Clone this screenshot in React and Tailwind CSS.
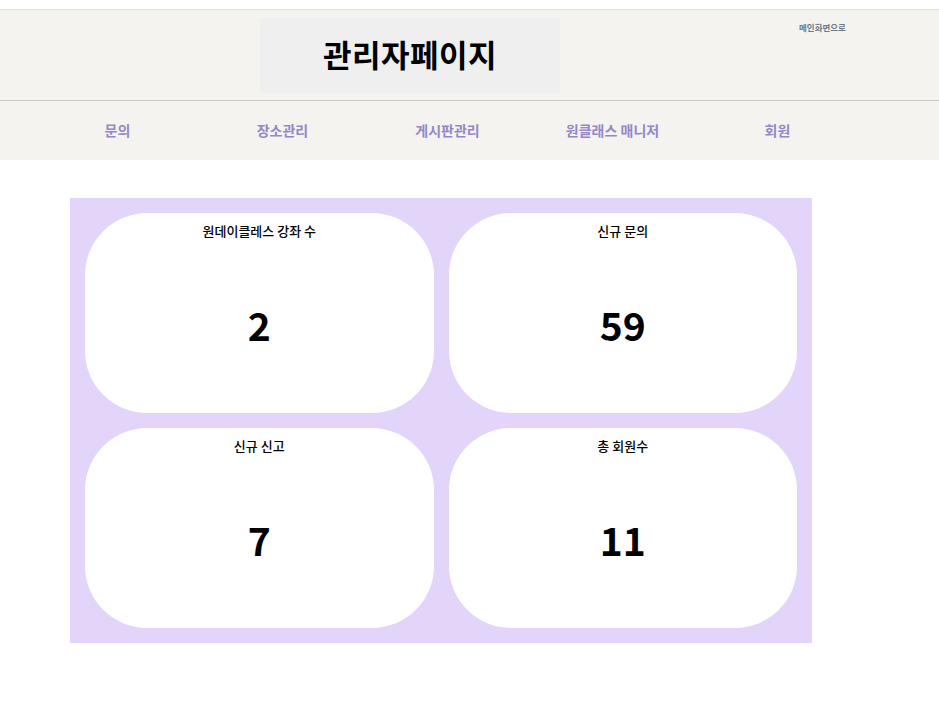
export default function App() {
  const font = { fontFamily: '"Noto Sans CJK KR", "Noto Sans", sans-serif' };
  const nav = ["문의", "장소관리", "게시판관리", "원클래스 매니저", "회원"];
  const cards = [
    ["원데이클레스 강좌 수", "2"],
    ["신규 문의", "59"],
    ["신규 신고", "7"],
    ["총 회원수", "11"],
  ];
  return (
    <div className="min-h-[712px] bg-white pt-[9px]" style={font}>
      <div className="bg-[#f4f3ef] border-t border-[#dedede]">
        <header className="flex h-[91px] border-b border-[#c9c9c9]">
          <div className="ml-[260px] mt-[8px] w-[300px] h-[75px] bg-[#efefef] flex items-center justify-center">
            <h1 className="text-[31px] font-bold text-black tracking-[0.5px] leading-none -mt-[4px]">관리자페이지</h1>
          </div>
          <a className="ml-[239px] mt-[13px] text-[8.5px] font-bold text-[#6e7a88] leading-none h-fit">메인화면으로</a>
        </header>
        <nav className="flex h-[59px] items-center pl-[35px]">
          {nav.map((n) => (
            <div key={n} className="w-[165px] text-center text-[14px] font-semibold text-[#9487c6] pb-[1px]">
              {n}
            </div>
          ))}
        </nav>
      </div>
      <main className="pt-[38px]">
        <div className="ml-[70px] w-[742px] bg-[#e3d4f9] p-[15px] grid grid-cols-2 gap-[15px]">
          {cards.map(([t, v]) => (
            <div key={t} className="h-[200px] bg-white rounded-[62px] flex flex-col items-center">
              <div className="pt-[9px] text-[13px] font-medium text-black leading-[18px]">{t}</div>
              <div className="mt-[62px] text-[39px] font-bold text-black leading-[44px]">{v}</div>
            </div>
          ))}
        </div>
      </main>
    </div>
  );
}
